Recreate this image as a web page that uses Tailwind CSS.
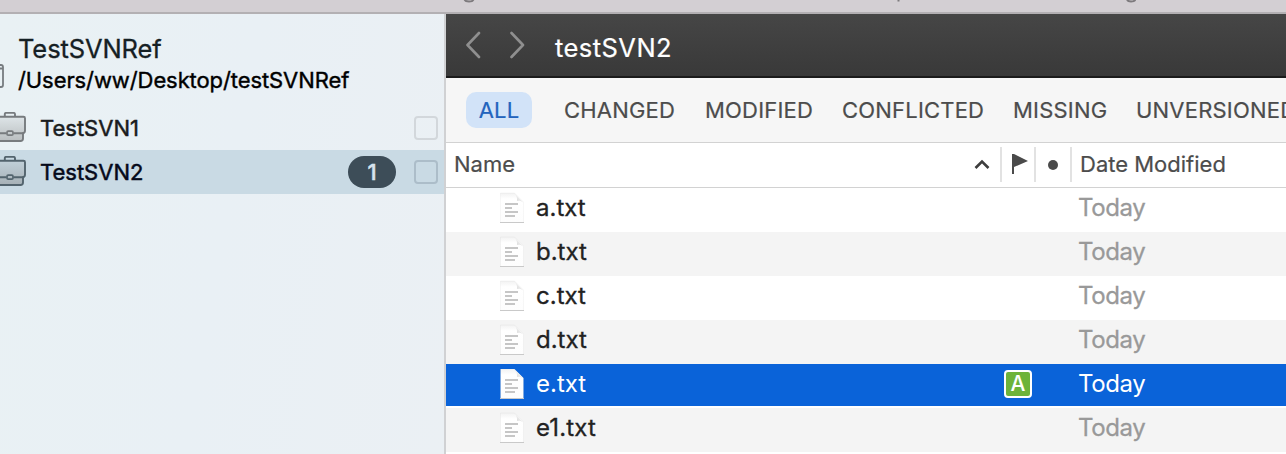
<!DOCTYPE html>
<html lang="en">
<head>
<meta charset="utf-8">
<title>testSVN2</title>
<script src="https://cdn.jsdelivr.net/npm/@tailwindcss/browser@4"></script>
</head>
<body class="w-[1286px] h-[454px] overflow-hidden font-['Inter','Liberation_Sans',sans-serif] bg-white flex flex-col whitespace-nowrap">
<svg class="absolute size-0">
  <defs>
    <linearGradient id="fold" x1="0" y1="1" x2="1" y2="0"><stop offset="0" stop-color="#cdcdcd"/><stop offset=".5" stop-color="#ececec"/><stop offset="1" stop-color="#fff"/></linearGradient>
    <linearGradient id="paper" x1="0" y1="0" x2="0" y2="1"><stop offset="0" stop-color="#f2f2f2"/><stop offset=".2" stop-color="#fff"/><stop offset="1" stop-color="#fdfdfd"/></linearGradient>
    <linearGradient id="bag" x1="0" y1="0" x2="0" y2="1"><stop offset="0" stop-color="#777" stop-opacity=".1"/><stop offset="1" stop-color="#777" stop-opacity=".42"/></linearGradient>
    <symbol id="doc" viewBox="0 0 24 32">
      <path d="M.5 1H14.500l9 9V30.500H.5z" fill="url(#paper)" stroke="#000" stroke-opacity=".03" stroke-width="1"/>
      <path d="M14 1L23.500 10.500C21 8.500 18.500 8.500 17 9c.3-3-.3-6-3-8z" fill="url(#fold)"/>
      <path d="M0 30.500H24" stroke="#c9c9c9" stroke-width="1"/>
      <path d="M5 12H18M5 16H12M5 20H18M5 24H15" stroke="#c6c6c6" stroke-width="2"/>
    </symbol>
    <symbol id="case" viewBox="0 0 28 32">
      <path d="M-6 4.800H23.500Q25 4.800 25 6.300V18.500Q25 20.800 23 21.200V26.500Q23 29 20.500 29H-6z" fill="url(#bag)" stroke="currentColor" stroke-width="1.900"/>
      <path d="M4.800 4.500V2.200Q4.800 .9 6.100 .9H13.700Q15 .9 15 2.200V4.500M-1 21.200H6.500M13.500 21.200H23.500" fill="none" stroke="currentColor" stroke-width="1.900"/>
      <rect x="7" y="19.200" width="6" height="3.900" rx="1.200" fill="none" stroke="currentColor" stroke-width="1.700"/>
    </symbol>
  </defs>
</svg>
<div class="h-3.5 shrink-0 bg-[#d3cfd3] border-b-2 border-[#b3b0b3]">
  <svg class="block" width="1286" height="4"><path d="M464.500 0Q465.500 1.500 469 1.500T473.500 0M1127 0Q1128 1.500 1131 1.500T1135.500 0M898.500 0V1.500" fill="none" stroke="#7d7a7d" stroke-width="2"/></svg>
</div>
<div class="flex flex-1 min-h-0">
  <aside class="w-[446px] shrink-0 border-r-2 border-[#d0d1d3] bg-linear-[100deg,#e9f1f4_0%,#e9f0f5_50%,#ebf0f4_100%]">
    <div class="h-[92px] relative">
      <svg class="absolute left-0 top-[50px]" width="5" height="25"><path d="M-2 1H1Q3 1 3 3V21Q3 23 1 23H-2M-2 4.500H3" fill="none" stroke="#777c80" stroke-width="1.800"/></svg>
      <div class="pt-[19px] pl-[18px] text-[25.500px] leading-8 tracking-[-0.100px] text-[#152024] [-webkit-text-stroke:0.300px]">TestSVNRef</div>
      <div class="pl-[18px] text-[22px] leading-[30px] tracking-[-0.090px] text-black [-webkit-text-stroke:0.400px_black]">/Users/ww/Desktop/testSVNRef</div>
    </div>
    <div class="h-11 flex items-center text-[22px] text-[#1a1c1e] [-webkit-text-stroke:0.500px]">
      <svg class="w-7 h-8 text-[#777b7e] shrink-0"><use href="#case"/></svg>
      <span class="ml-3 flex-1">TestSVN1</span>
      <span class="size-6 rounded-[4px] border-2 border-black/10 mr-1.5"></span>
    </div>
    <div class="h-11 flex items-center text-[22px] text-[#05091a] bg-[#c9dae4] [-webkit-text-stroke:0.500px]">
      <svg class="w-7 h-8 text-[#53646e] shrink-0"><use href="#case"/></svg>
      <span class="ml-3 flex-1">TestSVN2</span>
      <span class="w-12 h-8 rounded-full bg-[#3d4d58] text-[#d5e4ee] flex items-center justify-center mr-[18px] font-medium">1</span>
      <span class="size-6 rounded-[4px] border-2 border-[#acbdc9] mr-1.5"></span>
    </div>
  </aside>
  <main class="flex-1 min-w-0 overflow-hidden flex flex-col">
    <header class="h-16 shrink-0 bg-linear-to-b from-[#464646] to-[#393939] border-b-2 border-[#1b1b1b] flex items-center">
      <svg class="ml-5 w-[60px] h-7 shrink-0" viewBox="0 0 60 28" fill="none" stroke="#8f8f8f" stroke-width="2.600" stroke-linecap="round" stroke-linejoin="round"><path d="M13 2L1.500 14L13 26M45.500 2L57 14L45.500 26"/></svg>
      <span class="ml-[29px] mt-1.5 text-[25.500px] tracking-[0.450px] text-white [-webkit-text-stroke:0.200px]">testSVN2</span>
    </header>
    <nav class="h-[65px] shrink-0 bg-[#f6f6f6] border-b border-[#d2d2d2] flex items-center text-[22px] tracking-[0.200px] text-[#4c4c4c] [-webkit-text-stroke:0.200px]">
      <span class="ml-5 w-[66px] h-9 shrink-0 rounded-[10px] bg-[#d2e3f8] text-[#2364bd] flex items-center justify-center">ALL</span>
      <span class="ml-8 w-[141px] shrink-0">CHANGED</span>
      <span class="w-[137px] shrink-0">MODIFIED</span>
      <span class="w-[171px] shrink-0">CONFLICTED</span>
      <span class="w-[123px] shrink-0">MISSING</span>
      <span class="shrink-0">UNVERSIONED</span>
    </nav>
    <div class="h-[45px] shrink-0 border-b border-[#d2d2d2] flex items-center text-[22px] text-[#4c4c4c] [-webkit-text-stroke:0.200px]">
      <span class="ml-2 w-[520px] -mt-0.5">Name</span>
      <svg class="w-4 h-4 shrink-0 -mt-0.5" fill="none" stroke="#3d3d3d" stroke-width="2.600"><path d="M1.500 12L8 5.500L14.500 12"/></svg>
      <span class="ml-2.5 w-0.5 h-[35px] -mt-0.5 bg-[#e2e2e2]"></span>
      <svg class="ml-2.5 w-4 h-5 shrink-0 -mt-0.5" fill="#4a4a4a"><path d="M0 0H2L16 7L2 13V20H0z"/></svg>
      <span class="ml-1.5 w-0.5 h-[35px] -mt-0.5 bg-[#e2e2e2]"></span>
      <span class="ml-3 size-2.5 rounded-full bg-[#4a4a4a]"></span>
      <span class="ml-3 w-0.5 h-[35px] -mt-0.5 bg-[#e2e2e2]"></span>
      <span class="ml-2 -mt-0.5">Date Modified</span>
    </div>
    <div class="text-[24px] text-[#222] [-webkit-text-stroke:0.300px]">
      <div class="h-11 flex items-center bg-white"><svg class="ml-[54px] w-6 h-8 -mt-1"><use href="#doc"/></svg><span class="ml-3 w-[542px] -mt-1">a.txt</span><span class="text-[#999] -mt-1 tracking-[-0.400px]">Today</span></div>
      <div class="h-11 flex items-center bg-[#f4f4f4]"><svg class="ml-[54px] w-6 h-8 -mt-1"><use href="#doc"/></svg><span class="ml-3 w-[542px] -mt-1">b.txt</span><span class="text-[#999] -mt-1 tracking-[-0.400px]">Today</span></div>
      <div class="h-11 flex items-center bg-white"><svg class="ml-[54px] w-6 h-8 -mt-1"><use href="#doc"/></svg><span class="ml-3 w-[542px] -mt-1">c.txt</span><span class="text-[#999] -mt-1 tracking-[-0.400px]">Today</span></div>
      <div class="h-11 flex items-center bg-[#f4f4f4]"><svg class="ml-[54px] w-6 h-8 -mt-1"><use href="#doc"/></svg><span class="ml-3 w-[542px] -mt-1">d.txt</span><span class="text-[#999] -mt-1 tracking-[-0.400px]">Today</span></div>
      <div class="h-11 flex items-center bg-[#0a63d9] border-b-2 border-white text-white [-webkit-text-stroke:0]"><svg class="ml-[54px] w-6 h-8 -mt-0.5"><use href="#doc"/></svg><span class="ml-3 w-[468px] -mt-0.5">e.txt</span><span class="size-7 mt-[-2px] rounded-[4px] border-2 border-white bg-[#6db33a] flex items-center justify-center text-[21px] font-medium mr-[46px]">A</span><span class="-mt-0.5 tracking-[-0.400px]">Today</span></div>
      <div class="h-11 flex items-center bg-[#f4f4f4]"><svg class="ml-[54px] w-6 h-8 -mt-1"><use href="#doc"/></svg><span class="ml-3 w-[542px] -mt-1 tracking-[0.150px]">e1.txt</span><span class="text-[#999] -mt-1 tracking-[-0.400px]">Today</span></div>
    </div>
  </main>
</div>
</body>
</html>
